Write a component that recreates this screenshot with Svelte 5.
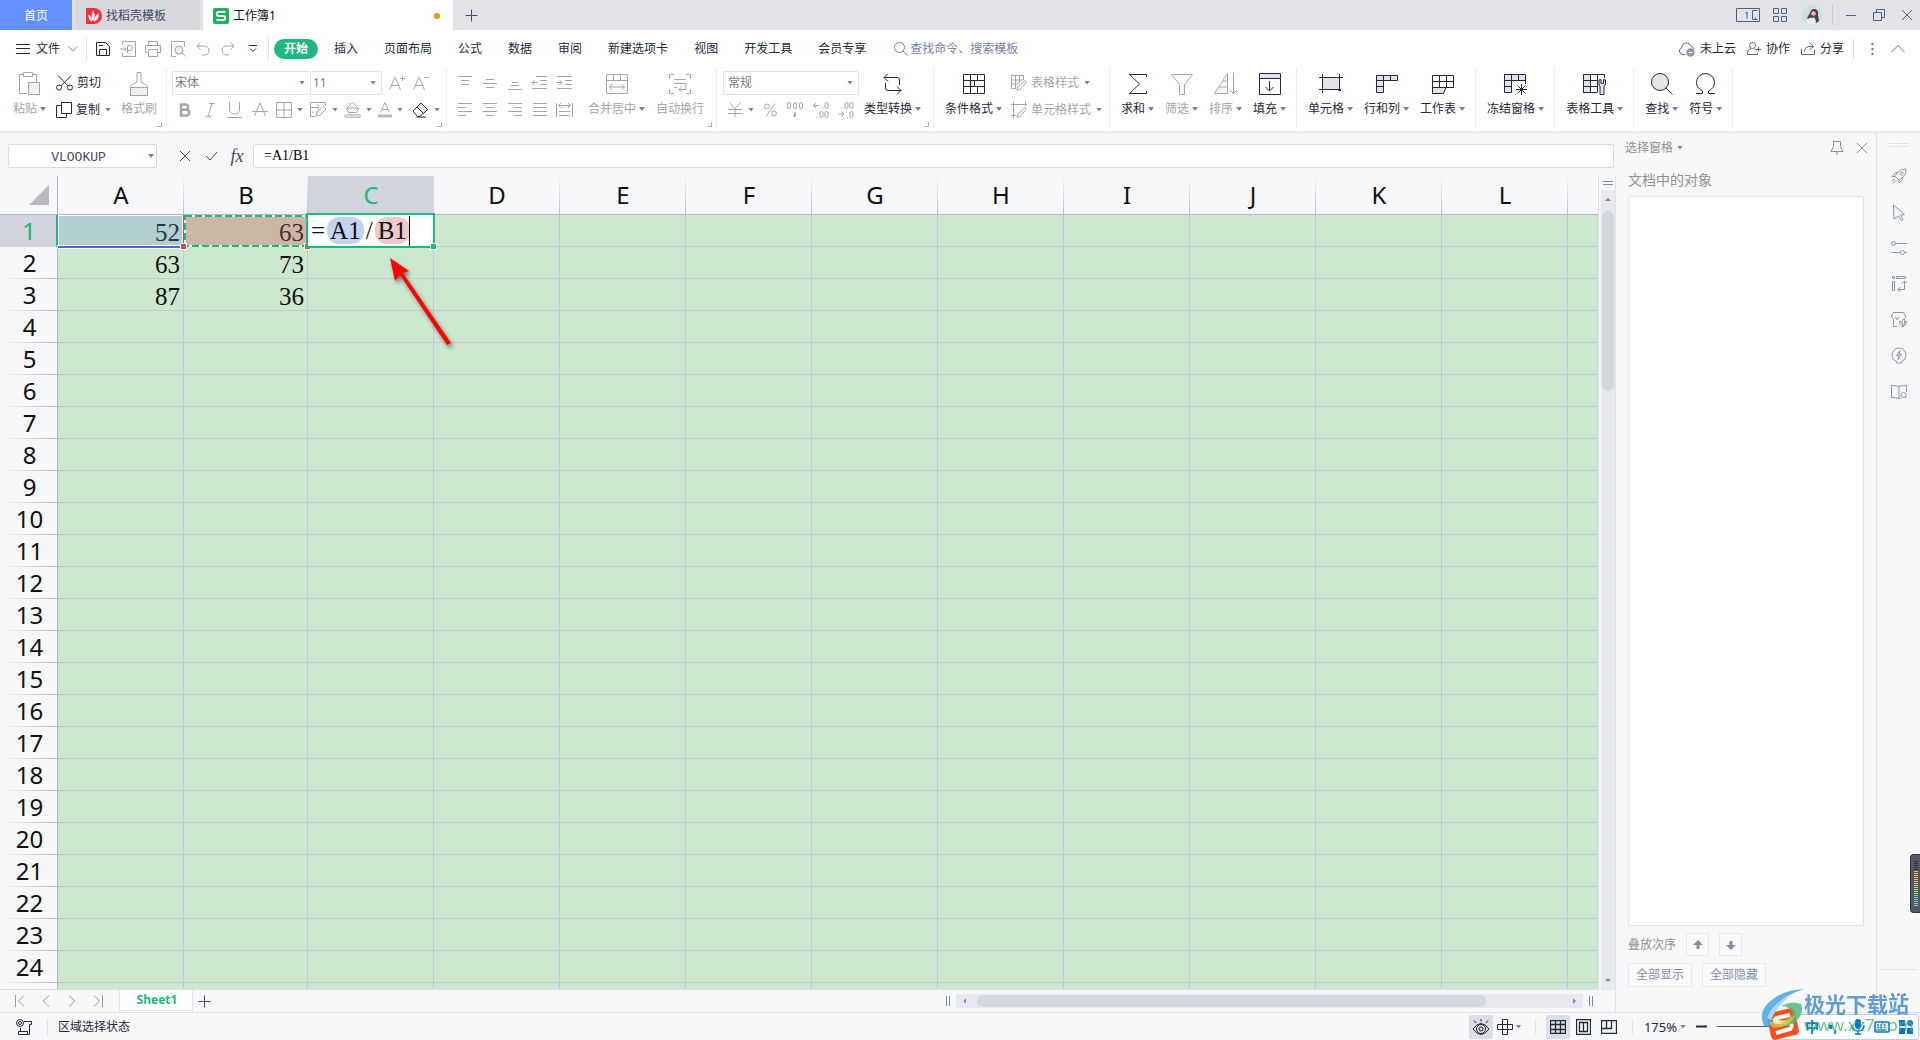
<script>
  const icons = {
    docer: [16, 16, '<g stroke="none"><path d="M0 0H8A7.800 7.800 0 0 1 8 16H0Z" fill="#f9303c"/><path d="M7 2.500C9.500 6 9 10 6.800 13.500C5.200 9 5.200 6 7 2.500ZM2.500 6.500C5 8 6 10.500 6 13.500C3.500 12.500 2 9.500 2.500 6.500ZM12.500 5C13.500 9.500 11 13 7.800 13.500C8.300 10 10 7 12.500 5Z" fill="#fff"/></g>'],
    wps: [16, 16, '<rect width="16" height="16" rx="2" fill="#17b45b" stroke="none"/><path d="M12.500 4H5.500Q3.800 4 3.800 6T5.500 8H10.500Q12.200 8 12.200 10T10.500 12H3.500" fill="none" stroke="#fff" stroke-width="1.800"/>'],
    plus: [13, 13, '<path d="M6.500 0.500V12.500M0.500 6.500H12.500"/>'],
    taskview: [25, 14, '<path d="M0.500 0.500H23.500V13.500H0.500ZM21.500 2.500H16.500V11.500H21.500M19.500 11V9.500M11 4V10.500M9.500 5L11 4"/>'],
    tiles: [14, 14, '<path d="M0.500 0.500H5.500V5.500H0.500ZM8.500 0.500H13.500V5.500H8.500ZM0.500 8.500H5.500V13.500H0.500ZM8.500 8.500H13.500V13.500H8.500Z"/>'],
    avatar: [20, 20, '<g stroke="none"><circle cx="10" cy="10" r="10" fill="#cddde2"/><path d="M8 8Q9 3.500 13 4Q17 5 16 10L17 16L14 18Q14 14 12 12L8 15L5 13Z" fill="#4a3e48"/><circle cx="11.500" cy="8.500" r="2.300" fill="#e8bfae"/><path d="M5 15Q9 10 13 15L12 19.500Q8 20 5 18Z" fill="#e7f0f4"/></g>'],
    min: [12, 12, '<path d="M1 6.500H11"/>'],
    restore: [12, 12, '<path d="M0.500 3.500H8.500V11.500H0.500ZM3.500 3.500V0.500H11.500V8.500H8.500"/>'],
    close: [12, 12, '<path d="M1 1L11 11M11 1L1 11"/>'],
    burger: [14, 12, '<path d="M0 1.500H14M0 5.500H14M0 10.500H14"/>'],
    chev: [10, 6, '<path d="M0.500 0.500L5 5L9.500 0.500"/>'],
    save: [16, 16, '<path d="M1.500 1.500H10.500L14.500 5.500V14.500H1.500ZM4.500 14V8.500H11.500V14M4 4.500H8"/>'],
    pdf: [16, 16, '<path d="M2.500 4V0.500H15.500V15.500H2.500V12M0 8H6M4 5.500L6.500 8L4 10.500M7.500 12V4.500H10Q12.500 5 12.500 7T10 9.500H7.500"/>'],
    print: [16, 16, '<path d="M3.500 4V0.500H12.500V4M3 11.500H0.500V4.500H15.500V11.500H13M3.500 8.500H12.500V15.500H3.500Z"/>'],
    preview: [16, 16, '<path d="M6 15.500H1.500V0.500H14.500V6"/><circle cx="9" cy="9" r="4" fill="#eee"/><path d="M12 12L15.500 15.500"/>'],
    undo: [14, 14, '<path d="M4.500 0.500L1 4L4.500 7.500M1 4H8.500A4.500 4.500 0 0 1 8.500 13H6"/>'],
    redo: [14, 14, '<path d="M9.500 0.500L13 4L9.500 7.500M13 4H5.500A4.500 4.500 0 0 0 5.500 13H8"/>'],
    more: [8, 10, '<path d="M0 1.500H8M1 4.500L4 7.500L7 4.500"/>'],
    search: [14, 14, '<circle cx="5.500" cy="5.500" r="5"/><path d="M9 9L13.500 13.500"/>'],
    cloud: [16, 16, '<path d="M6 13.500H4A3.500 3.500 0 0 1 2.500 6.800A5 5 0 0 1 12 5Q15 6 14.500 8.500"/><circle cx="11.500" cy="11.500" r="4.200" fill="#8d98b0" stroke="none"/><path d="M9.500 11.500H13.500" stroke="#fff"/>'],
    collab: [14, 14, '<circle cx="5.500" cy="3.500" r="3"/><path d="M4 6.500Q0.500 8 0.500 10.500V12.500H10.500V11M7 6.500L9 8.500M11.500 4.500V9.500M9 7.500H14"/>'],
    share: [14, 14, '<path d="M0.500 7V12.500H13.500V8M3.500 9.500Q4 4.500 9 4.500H12M8.500 0.500L12.500 4.500L8.500 8"/>'],
    dots: [3, 14, '<path d="M0.500 2H2.500M0.500 7H2.500M0.500 12H2.500" stroke-width="2"/>'],
    up: [14, 8, '<path d="M0.500 7L7 0.500L13.500 7"/>'],
    paste: [22, 24, '<path d="M8 21.500H0.500V2.500H4.500M13.500 2.500H17.500V10M4.500 0.500H13.500V4.500H4.500Z"/><path d="M9.500 10.500H20.500V22.500H9.500Z" fill="#f3f3f4"/>'],
    cut: [17, 16, '<path d="M2 0.500L12 11M15 0.500L5 11"/><circle cx="3" cy="12.500" r="2.500"/><circle cx="14" cy="12.500" r="2.500"/>'],
    copy: [16, 16, '<path d="M5.500 0.500H15.500V11.500H5.500ZM5 3.500H0.500V15.500H10.500V12"/>'],
    brush: [18, 24, '<path d="M7 0.500H11V10L17.500 14V23.500H0.500V14L7 10Z"/><path d="M0.500 15.500H17.500V23.500H0.500Z" fill="#efeff0"/>'],
    fontup: [16, 16, '<path d="M0.500 15L6 2L11.500 15M2.500 10.500H9.500M11 3.500H16M13.500 1V6"/>'],
    fontdown: [16, 16, '<path d="M0.500 15L6 2L11.500 15M2.500 10.500H9.500M11 2.500H16"/>'],
    bold: [12, 14, '<path d="M2 1.500H6.500A2.600 2.600 0 0 1 6.500 6.700H2ZM2 6.700H7.500A2.900 2.900 0 0 1 7.500 12.500H2Z" stroke-width="2.400"/>'],
    italic: [10, 14, '<path d="M4 0.500H9.500M0.500 13.500H6M7 0.500L3 13.500"/>'],
    underline: [15, 16, '<path d="M2.500 0V7Q2.500 12 7.500 12T12.500 7V0M0 15.500H15"/>'],
    strike: [16, 16, '<path d="M2.500 14L8 1L13.500 14M0 9.500H16"/>'],
    border: [16, 16, '<path d="M0.500 0.500H15.500V15.500H0.500ZM8 0.500V15.500M0.500 8H15.500"/>'],
    draw: [17, 16, '<path d="M5 14.500H0.500V0.500H15.500V4M0 5.500H9" /><path d="M2 10H8M8 2V9" stroke-dasharray="2 2"/><path d="M6 14L7 10.500L13 4.500L16 7L10 13Z"/>'],
    fill: [17, 16, '<path d="M2.500 6.500L8.500 0.500L15 7L12.500 10.500H4.500ZM4.500 0.500L7 3M2.500 6.500Q8 4.500 15 7"/><rect x="0.500" y="12.500" width="16" height="3" rx="1.500" fill="#ddd" stroke-width="0.600"/>'],
    color: [14, 16, '<path d="M2.500 10.500L7 0.500L11.500 10.500M4 7.500H10"/><rect y="12.500" width="14" height="3" fill="#b9b9bb" stroke="none"/>'],
    eraser: [17, 16, '<path d="M1 9L9 1L15.500 7.500L8 14.500H5.500ZM4.500 15H14" fill="#fff"/><path d="M5 5L9 1L15.500 7.500L11.500 11.500Z" fill="#dfe0e4"/>'],
    t1: [16, 16, '<path d="M1 1.500H15M4 5.500H12M4 9.500H12"/>'],
    t2: [16, 16, '<path d="M4 4.500H12M1 8.500H15M4 12.500H12"/>'],
    t3: [16, 16, '<path d="M5 7.500H11M4 10.500H12M1 14.500H15"/>'],
    ind1: [17, 16, '<path d="M5 1.500H16M9 5.500H16M9 9.500H16M1 13.500H16M1 7.500H7M3.500 5L1 7.500L3.500 10"/>'],
    ind2: [17, 16, '<path d="M1 1.500H16M9 5.500H16M9 9.500H16M1 13.500H16M0 7.500H6M3.500 5L6 7.500L3.500 10"/>'],
    l1: [16, 16, '<path d="M1 1.500H15M1 5.500H9M1 9.500H15M1 13.500H9"/>'],
    l2: [16, 16, '<path d="M1 1.500H15M4 5.500H12M1 9.500H15M4 13.500H12"/>'],
    l3: [16, 16, '<path d="M1 1.500H15M7 5.500H15M1 9.500H15M7 13.500H15"/>'],
    l4: [16, 16, '<path d="M1 1.500H15M1 5.500H15M1 9.500H15M1 13.500H15"/>'],
    l5: [17, 16, '<path d="M0.500 1V15M16.500 1V15M3 3.500H14M5 1L2.500 3.500L5 6M12 1L14.500 3.500L12 6M3 9.500H14M3 13.500H14"/>'],
    merge: [22, 20, '<path d="M0.500 0.500H21.500V19.500H0.500ZM0.500 6.500H21.500M7.500 0.500V6.500M14.500 0.500V6.500M3.500 13H18.500M6.500 10L3.500 13L6.500 16M15.500 10L18.500 13L15.500 16"/>'],
    wrap: [22, 20, '<path d="M5 0.500H0.500V5M17 0.500H21.500V5M0.500 15V19.500H5M21.500 15V19.500H17M5 5.500H17M5 9.500H17M5 13.500H8M17 9V15.500H10M12.500 13L10 15.500L12.500 18"/>'],
    yen: [16, 16, '<path d="M3 1L8 7L13 1M1 7.500H15M1 11.500H15M8 7V15"/>'],
    pct: [13, 14, '<circle cx="3" cy="3.500" r="2.500"/><circle cx="10" cy="10.500" r="2.500"/><path d="M11 0.500L2 13.500"/>'],
    thou: [17, 16, '<rect x="0.500" y="0.500" width="3" height="6" rx="1.500"/><rect x="6.500" y="0.500" width="3" height="6" rx="1.500"/><rect x="12.500" y="0.500" width="3" height="6" rx="1.500"/><path d="M8 10.500V13L7 15" stroke-width="2"/>'],
    dec1: [16, 16, '<path d="M0.500 3.500H6M3 1L0.500 3.500L3 6M9 6.500H10M3.500 15.500H4.500"/><rect x="12" y="0.500" width="3" height="6" rx="1.500"/><rect x="7" y="9.500" width="3" height="6" rx="1.500"/><rect x="12" y="9.500" width="3" height="6" rx="1.500"/>'],
    dec2: [16, 16, '<path d="M0.500 12H6M3.500 9.500L6 12L3.500 14.500M9 15.500H10M3.500 6.500H4.500"/><rect x="12" y="9.500" width="3" height="6" rx="1.500"/><rect x="7" y="0.500" width="3" height="6" rx="1.500"/><rect x="12" y="0.500" width="3" height="6" rx="1.500"/>'],
    convert: [20, 22, '<path d="M1 4.500H14Q16.500 4.500 16.500 7V12M5 0.500L1 4.500L5 8.500M2.500 10V15Q2.500 17.500 5 17.500H18M14 13.500L18 17.500L14 21.500"/>'],
    cond: [22, 20, '<path d="M6.500 6.500H10.500V13.500H6.500Z" fill="#dfe0e4" stroke="none"/><path d="M0.500 0.500H21.500V19.500H0.500ZM0.500 6.500H21.500M0.500 12.500H21.500M7.500 0.500V19.500M14.500 0.500V6.500M11.500 6.500V12.500M14.500 12.500V19.500"/>'],
    tstyle: [16, 16, '<path d="M12.500 5V0.500H0.500V13.500H5M0.500 5H12M0.500 9H8M4.500 0.500V13.500M8.500 0.500V8"/><path d="M6 15Q6 11 9 10.500L14 5.500L15.500 7.500L10.500 12.500Q9.500 15.500 6 15Z"/>'],
    cstyle: [16, 16, '<path d="M0 2.500H16M2.500 0V16M14.500 0V4M0 13.500H5"/><path d="M6 15Q6 11 9 10.500L14 5.500L15.500 7.500L10.500 12.500Q9.500 15.500 6 15Z"/>'],
    sum: [20, 22, '<path d="M18.500 4V1.500H1.500L11.500 11L1.500 20.500H18.500V18"/>'],
    filter: [22, 22, '<path d="M0.500 1.500H21.500L13.500 11.500V21.500H8.500V11.500Z"/>'],
    sort: [24, 22, '<path d="M13.500 0.500V20.500H0.500ZM9 8H13.500M5 14H13.500M19.500 0V20.500M16 17L19.500 20.500L23 17"/>'],
    fillin: [22, 22, '<path d="M0.500 0.500H21.500V5.500H0.500Z" fill="#e2e3e6"/><path d="M0.500 5.500V21.500H21.500V5.500M10.500 8V18M6.500 14L10.500 18L14.500 14"/>'],
    cell: [24, 20, '<path d="M3.500 3.500H20.500V15.500H3.500Z" fill="#e2e3e6"/><path d="M0 3.500H24M0 15.500H18M3.500 0V19M20.500 0V13" /><path d="M19.500 16H22" stroke-width="2"/>'],
    rowcol: [22, 20, '<path d="M0.500 1.500H21.500V6.500H7.500V18.500H0.500Z" fill="#e2e3e6"/><path d="M7.500 1.500V6.500H0.500M14.500 1.500V6.500M0.500 12.500H7.500"/>'],
    sheet: [22, 20, '<path d="M0.500 13.500H14L11.500 19.500H0.500Z" fill="#e2e3e6"/><path d="M0.500 1.500H21.500V13.500H0.500ZM0.500 7.500H21.500M7.500 1.500V13.500M14.500 1.500V13.500"/>'],
    freeze: [24, 22, '<path d="M0.500 1.500H21.500V7.500H7.500V19.500H0.500Z" fill="#e2e3e6"/><path d="M7.500 1.500V7.500H0.500M14.500 1.500V7.500M0.500 13.500H7.500M21.500 7V11M17.500 11V22M12 16.500H23M13.500 12.500L21.500 20.500M21.500 12.500L13.500 20.500"/>'],
    tools: [24, 22, '<path d="M0.500 1.500H7.500V19.500H0.500Z" fill="#e2e3e6"/><path d="M21.500 5V1.500H0.500V19.500H14M0.500 7.500H15M0.500 13.500H14M7.500 1.500V19.500M14.500 1.500V19.500"/><path d="M16 7V12L17 13V21.500H21V13L22.500 12V7L20.500 6.500V10.500H18V6.500Z" fill="#e2e3e6"/>'],
    find: [22, 22, '<circle cx="9" cy="9" r="8.500" fill="#e6e6e9"/><path d="M15 15L21.500 21.500"/>'],
    omega: [22, 22, '<path d="M1 20.500H7.500V18Q1.500 15 1.500 9.500A9 9 0 0 1 19.500 9.500Q19.500 15 13.500 18V20.500H20"/>'],
    tick: [13, 10, '<path d="M1 5L5 9L12 1"/>'],
    pin: [14, 14, '<path d="M3.500 0.500H10.500V5.500L13 10.500H1L3.500 5.500ZM7 10.500V14"/>'],
    rocket: [16, 16, '<path d="M4 8.500L7 4Q10 0.500 15 1Q15.500 6 12 9L8 12ZM4 8.500H1L4.500 4.500H7M8 12V15L11.500 11.500V9M3.500 10.500L1 13M5.500 12L2 15.500"/><circle cx="10.500" cy="5.500" r="1.500"/>'],
    pointer: [14, 17, '<path d="M1.500 1L12.500 10.500L8.500 11L11 15.500L9 16.500L6.500 12L2 15Z"/>'],
    sliders: [16, 16, '<circle cx="2.500" cy="3.500" r="2"/><circle cx="11.500" cy="12.500" r="2"/><path d="M5 3.500H16M0 12.500H9M14 12.500H16"/>'],
    resize: [16, 16, '<path d="M1.500 0.500H3.500V2.500H1.500ZM5.500 0.500H14.500V2.500H5.500ZM1.500 5.500H3.500V14.500H1.500ZM13.500 5V13.500H7M11 7.500L13.500 5L16 7.500M9.500 11L7 13.500L9.500 16"/>'],
    store: [16, 16, '<path d="M6 14.500H2.500V7Q0.500 6 0.500 4L2.500 0.500H12.500L14.500 4V6M5 5V7Q6.500 9 8 5"/><path d="M11.500 15Q8 13 8.500 9Q10 9.500 11 11Q11 8 13 6.500Q14 8 13.500 11Q14 9.500 15.500 9Q15.500 14 11.500 15ZM11 11L12 15M13.500 11L12 15"/>'],
    bulb: [16, 18, '<path d="M5.500 16V14.500A7 7 0 1 1 10.500 14.500V16Z"/><path d="M9 3.500L5.500 8.500H8L7 12.500L10.500 7.500H8Z"/>'],
    book: [16, 16, '<path d="M8 15V2.500Q5 1.500 0.500 1.500V13.500Q5 13.500 8 14.500M8 2.500Q11 1.500 15.500 1.500V8M10 14.500H8"/><circle cx="12.500" cy="11" r="2.500"/><path d="M14 12.500L16 14.500"/>'],
    aup: [10, 10, '<path d="M5 0L10 5H6.500V9H3.500V5H0Z" fill="currentColor" stroke="none"/>'],
    adown: [10, 10, '<path d="M5 10L0 5H3.500V1H6.500V5H10Z" fill="currentColor" stroke="none"/>'],
    first: [10, 12, '<path d="M0.500 0V12M9 0.500L3.500 6L9 11.500"/>'],
    prev: [10, 12, '<path d="M8 0.500L2 6L8 11.500"/>'],
    next: [10, 12, '<path d="M2 0.500L8 6L2 11.500"/>'],
    last: [10, 12, '<path d="M9.500 0V12M1 0.500L6.500 6L1 11.500"/>'],
    macro: [17, 16, '<circle cx="4" cy="4" r="3.500"/><circle cx="4" cy="4" r="1.500"/><path d="M8 2.500H15.500V5.500H13.500V12M4.500 9V12M2.500 12.500H11.500V15.500H2.500ZM11.500 15.500H13.500V11"/>'],
    eye: [18, 16, '<path d="M1 10Q5 4.500 9 4.500T17 10Q13 15.500 9 15.500T1 10ZM9 0V2.500M2 1.500L4 4M16 1.500L14 4"/><circle cx="9" cy="10" r="4.500"/><circle cx="9" cy="10" r="2"/>'],
    cross: [16, 16, '<path d="M5.500 0.500H10.500V15.500H5.500ZM0.500 5.500H15.500V10.500H0.500Z"/>'],
    vgrid: [16, 14, '<path d="M0.500 0.500H15.500V13.500H0.500ZM0.500 4.500H15.500M0.500 9.500H15.500M5.500 0.500V13.500M10.500 0.500V13.500" stroke-width="1.300"/>'],
    vpage: [15, 16, '<path d="M0.500 0.500H14.500V15.500H0.500ZM3.500 3.500H11.500V12.500H3.500ZM7.500 3.500V12.500" stroke-width="1.300"/>'],
    vbreak: [16, 14, '<path d="M0.500 0.500H15.500V13.500H0.500ZM5.500 0.500V8.500M10.500 0.500V8.500H0.500" stroke-width="1.300"/>'],
    minus: [11, 3, '<path d="M0 1.500H11" stroke-width="2"/>'],
    bars: [4, 10, '<path d="M0.500 0V10M3.500 0V10"/>'],
    mic: [14, 16, '<rect x="4" y="0" width="6" height="10" rx="3" fill="currentColor" stroke="none"/><path d="M1 6Q1 12 7 12T13 6M7 12V16M4 15H10" stroke-width="1.500"/>'],
    keys: [16, 12, '<rect x="1" y="1" width="14" height="10" rx="1" stroke-width="1.600"/><path d="M3 4H13M3 6.500H13" stroke-dasharray="2 1.300" stroke-width="1.500"/><path d="M4 9H12" stroke-width="1.300"/>'],
    apps: [14, 14, '<path d="M0 0H6V6H0ZM8 8H14V14H8ZM0 8H6V14H0Z" fill="currentColor" stroke="none"/><circle cx="11" cy="3" r="3" fill="currentColor" stroke="none"/>']
  };

  const menus = ['开始', '插入', '页面布局', '公式', '数据', '审阅', '新建选项卡', '视图', '开发工具', '会员专享'];
  const quick = ['save', 'pdf', 'print', 'preview', 'undo', 'redo', 'more'];
  const quickNames = ['保存', '输出为PDF', '打印', '打印预览', '撤销', '恢复', '更多'];
  const styleTools = [['bold', '加粗'], ['italic', '倾斜'], ['underline', '下划线'], ['strike', '删除线']];
  const dropTools = [['border', '边框'], ['draw', '绘制边框'], ['fill', '填充颜色'], ['color', '字体颜色'], ['eraser', '清除']];
  const alignA = [['t1', '顶端对齐'], ['t2', '垂直居中'], ['t3', '底端对齐'], ['ind1', '减少缩进'], ['ind2', '增加缩进']];
  const alignB = [['l1', '左对齐'], ['l2', '水平居中'], ['l3', '右对齐'], ['l4', '两端对齐'], ['l5', '分散对齐']];
  const groups = [
    [['sum', '求和'], ['filter', '筛选', true], ['sort', '排序', true], ['fillin', '填充']],
    [['cell', '单元格'], ['rowcol', '行和列'], ['sheet', '工作表']],
    [['freeze', '冻结窗格']],
    [['tools', '表格工具']],
    [['find', '查找'], ['omega', '符号']]
  ];
  // The last column and row are only partly in view, so they carry no heading.
  const columns = [...'ABCDEFGHIJKL', ''];
  const rows = [...Array.from({ length: 24 }, (_, i) => i + 1), ''];
  const values = { A1: 52, B1: 63, A2: 63, B2: 73, A3: 87, B3: 36 };
  const side = [['rocket', '快捷'], ['pointer', '选择'], ['sliders', '属性'], ['resize', '尺寸'], ['store', '稻壳'], ['bulb', '帮助'], ['book', '词典']];
  const meter = Array.from({ length: 23 }, (_, i) => i);
</script>

{#snippet icon(name)}
  <svg class="icon" width={icons[name][0]} height={icons[name][1]} viewBox="0 0 {icons[name][0]} {icons[name][1]}" aria-hidden="true">{@html icons[name][2]}</svg>
{/snippet}

{#snippet big(name, label, off, drop)}
  <button class="big" class:off>
    <span class="pic">{@render icon(name)}</span>
    <span class="lab">{label}{#if drop}<i class="caret"></i>{/if}</span>
  </button>
{/snippet}

<div class="app">
  <header class="title">
    <button class="tab home">首页</button>
    <button class="tab docer">{@render icon('docer')}找稻壳模板</button>
    <button class="tab current">{@render icon('wps')}工作簿1<i class="unsaved"></i></button>
    <button class="newtab" aria-label="新建">{@render icon('plus')}</button>
    <div class="window">
      <button aria-label="布局">{@render icon('taskview')}</button>
      <button aria-label="应用">{@render icon('tiles')}</button>
      <button class="avatar" aria-label="账号">{@render icon('avatar')}</button>
      <i class="wsep"></i>
      <button aria-label="最小化">{@render icon('min')}</button>
      <button class="wide" aria-label="还原">{@render icon('restore')}</button>
      <button class="wide" aria-label="关闭">{@render icon('close')}</button>
    </div>
  </header>

  <nav class="menu">
    <button class="file">{@render icon('burger')}文件<span class="faint">{@render icon('chev')}</span></button>
    <div class="quick">
      {#each quick as q, i}
        <button class:off={i > 0 && i < 6} aria-label={quickNames[i]}>{@render icon(q)}</button>
      {/each}
    </div>
    <div class="menus">
      {#each menus as m, i}
        <button class:active={i === 0}>{m}</button>
      {/each}
    </div>
    <button class="find">{@render icon('search')}查找命令、搜索模板</button>
    <div class="account">
      <button>{@render icon('cloud')}未上云</button>
      <button>{@render icon('collab')}协作</button>
      <button>{@render icon('share')}分享</button>
    </div>
    <div class="fold">
      <button aria-label="更多">{@render icon('dots')}</button>
      <button aria-label="收起">{@render icon('up')}</button>
    </div>
  </nav>

  <div class="ribbon">
    <section class="group clip">
      {@render big('paste', '粘贴', true, true)}
      <div class="stack">
        <button class="small">{@render icon('cut')}剪切</button>
        <button class="small">{@render icon('copy')}复制<i class="caret"></i></button>
      </div>
      {@render big('brush', '格式刷', true, false)}
      <i class="launch"></i>
    </section>

    <section class="group font off">
      <div class="line">
        <label class="pick family"><select aria-label="字体"><option>宋体</option></select><i class="caret"></i></label>
        <label class="pick size"><select aria-label="字号"><option>11</option></select><i class="caret"></i></label>
        <button class="grow" aria-label="增大字号">{@render icon('fontup')}</button>
        <button class="grow" aria-label="减小字号">{@render icon('fontdown')}</button>
      </div>
      <div class="line">
        {#each styleTools as [n, t]}
          <button class="tool" aria-label={t}>{@render icon(n)}</button>
        {/each}
        {#each dropTools as [n, t]}
          <button class="drop" class:on={n === 'eraser'} aria-label={t}>{@render icon(n)}<i class="caret"></i></button>
        {/each}
      </div>
      <i class="launch"></i>
    </section>

    <section class="group align off">
      <div class="stack">
        <div class="line">
          {#each alignA as [n, t]}<button class="tool" aria-label={t}>{@render icon(n)}</button>{/each}
        </div>
        <div class="line">
          {#each alignB as [n, t]}<button class="tool" aria-label={t}>{@render icon(n)}</button>{/each}
        </div>
      </div>
      {@render big('merge', '合并居中', true, true)}
      {@render big('wrap', '自动换行', true, false)}
      <i class="launch"></i>
    </section>

    <section class="group number">
      <div class="stack off">
        <div class="line">
          <label class="pick format"><select aria-label="数字格式"><option>常规</option></select><i class="caret"></i></label>
        </div>
        <div class="line nums">
          <button class="drop" aria-label="货币">{@render icon('yen')}<i class="caret"></i></button>
          <button class="tool" aria-label="百分比">{@render icon('pct')}</button>
          <button class="tool" aria-label="千位分隔">{@render icon('thou')}</button>
          <button class="tool" aria-label="增加小数位">{@render icon('dec1')}</button>
          <button class="tool" aria-label="减少小数位">{@render icon('dec2')}</button>
        </div>
      </div>
      {@render big('convert', '类型转换', false, true)}
      <i class="launch"></i>
    </section>

    <section class="group styles">
      {@render big('cond', '条件格式', false, true)}
      <div class="stack">
        <button class="small off">{@render icon('tstyle')}表格样式<i class="caret"></i></button>
        <button class="small off">{@render icon('cstyle')}单元格样式<i class="caret"></i></button>
      </div>
    </section>

    {#each groups as g}
      <section class="group">
        {#each g as [n, t, off]}
          {@render big(n, t, off, true)}
        {/each}
      </section>
    {/each}
  </div>

  <main class="work">
    <div class="book">
      <div class="formula">
        <div class="name"><input aria-label="名称框" value="VLOOKUP" /><button aria-label="展开名称"><i class="caret"></i></button></div>
        <button aria-label="取消">{@render icon('close')}</button>
        <button aria-label="输入">{@render icon('tick')}</button>
        <button class="fx" aria-label="插入函数">fx</button>
        <input class="entry" aria-label="编辑栏" value="=A1/B1" />
      </div>

      <div class="canvas">
        <div class="sheet">
          <table>
            <thead>
              <tr>
                <th class="corner"><i class="tri"></i></th>
                {#each columns as c}
                  <th class="col" class:narrow={c === 'B'} class:sel={c === 'C'}>{c}</th>
                {/each}
              </tr>
            </thead>
            <tbody>
              {#each rows as r}
                <tr>
                  <th class="row" class:sel={r === 1}>{r}</th>
                  {#each columns as c}
                    {#if r === 1 && c === 'A'}
                      <td class="refa">52</td>
                    {:else if r === 1 && c === 'B'}
                      <td class="refb">63<svg class="ants" aria-hidden="true"><rect class="base" x="1" y="1" width="122" height="30" /><rect x="1" y="1" width="122" height="30" /></svg></td>
                    {:else if r === 1 && c === 'C'}
                      <td><div class="edit">=<span class="ra">A1</span>/<span class="rb">B1</span><i class="cursor"></i></div></td>
                    {:else}
                      <td>{values[c + r] ?? ''}</td>
                    {/if}
                  {/each}
                </tr>
              {/each}
            </tbody>
          </table>
          <svg class="pointer" width="80" height="106" viewBox="0 0 80 106" aria-hidden="true">
            <path d="M4 4L23 17L17 19L65 89L61 91L14 21L9 27Z" />
          </svg>
        </div>
        <div class="vbar">
          <i class="split"></i>
          <div class="vtrack"><i class="tu"></i><i class="vthumb"></i><i class="td"></i></div>
        </div>
      </div>

      <div class="sheets">
        <div class="navs">
          <button aria-label="第一个">{@render icon('first')}</button>
          <button aria-label="上一个">{@render icon('prev')}</button>
          <button aria-label="下一个">{@render icon('next')}</button>
          <button aria-label="最后一个">{@render icon('last')}</button>
        </div>
        <button class="stab">Sheet1</button>
        <button class="add" aria-label="新建工作表">{@render icon('plus')}</button>
        <div class="hbar">
          {@render icon('bars')}
          <div class="htrack"><i class="tl"></i><i class="hthumb"></i><i class="tr"></i></div>
          {@render icon('bars')}
        </div>
      </div>
    </div>

    <aside class="pane">
      <div class="phead">
        <button>选择窗格<i class="caret"></i></button>
        <span class="pacts">
          <button aria-label="固定">{@render icon('pin')}</button>
          <button aria-label="关闭窗格">{@render icon('close')}</button>
        </span>
      </div>
      <h2>文档中的对象</h2>
      <div class="list"></div>
      <div class="order">叠放次序
        <button aria-label="上移">{@render icon('aup')}</button>
        <button aria-label="下移">{@render icon('adown')}</button>
      </div>
      <div class="shows">
        <button>全部显示</button>
        <button>全部隐藏</button>
      </div>
    </aside>

    <aside class="rail">
      <i class="grip"></i>
      {#each side as [n, t]}
        <button aria-label={t}>{@render icon(n)}</button>
      {/each}
      <i class="rule"></i>
      <button class="ell" aria-label="更多工具"><i></i><i></i><i></i></button>
    </aside>
  </main>

  <footer class="status">
    <span class="mac">{@render icon('macro')}</span>
    <span class="state">区域选择状态</span>
    <div class="views">
      <button class="on" aria-label="护眼模式">{@render icon('eye')}</button>
      <button class="read" aria-label="阅读模式">{@render icon('cross')}<i class="caret"></i></button>
      <i class="ssep"></i>
      <button class="on" aria-label="普通视图">{@render icon('vgrid')}</button>
      <button aria-label="页面布局">{@render icon('vpage')}</button>
      <button aria-label="分页预览">{@render icon('vbreak')}</button>
      <i class="ssep"></i>
      <button class="pct">175%<i class="caret"></i></button>
      <button class="less" aria-label="缩小">{@render icon('minus')}</button>
      <input type="range" aria-label="缩放" min="10" max="400" value="290" />
    </div>
  </footer>

  <div class="meter">
    {#each meter as m}<i class:dark={m < 5} class:amber={m >= 5 && m < 11} class:lime={m >= 11 && m < 17}></i>{/each}
  </div>

  <div class="ime">
    <span>中</span><span class="punct">•,</span>{@render icon('mic')}{@render icon('keys')}{@render icon('apps')}
  </div>
  <svg class="logo" width="44" height="52" viewBox="0 0 44 52" aria-hidden="true">
    <path d="M8 25L30 20Q33 20 34 24L38 43Q38 46 34 47L14 52Q11 52 10 48L6 30Q6 26 8 25Z" fill="#f4511e" />
    <path d="M29 27L16 30Q12 32 15 34L28 35Q33 37 29 41L15 45" fill="none" stroke="#fff" stroke-width="4" />
    <path d="M3 38Q-4 22 12 11Q24 2 43 1Q24 7 17 16Q9 26 12 36Q8 40 3 38Z" fill="#4aa3e3" opacity="0.850" />
    <path d="M6 30Q10 16 30 7Q15 19 10 32Z" fill="#a5d8f7" />
    <path d="M20 18Q30 12 40 16Q44 26 33 35Q24 40 14 38Q31 33 32 25Q30 19 20 18Z" fill="#55b87c" opacity="0.850" />
    <path d="M8 34Q22 35 34 27Q30 39 12 40Z" fill="#e9d843" opacity="0.600" />
  </svg>
  <div class="mark"><b>极光下载站</b><span>www.xz7.com</span></div>
</div>

<style>
  :global(body) { margin: 0; }
  .app {
    --ink: #1f2a3c;
    --green: #20b97d;
    position: relative;
    display: flex;
    flex-direction: column;
    height: 100vh;
    overflow: hidden;
    background: #f6f7f9;
    color: var(--ink);
    font: 12px/16px "Noto Sans", "Noto Sans CJK SC", sans-serif;
  }
  .app :global(*) { box-sizing: border-box; }
  button { font: inherit; color: inherit; background: none; border: 0; padding: 0; margin: 0; white-space: nowrap; display: flex; align-items: center; }
  input, select { font: inherit; color: inherit; border: 0; outline: 0; padding: 0; margin: 0; background: none; }
  .icon { display: block; flex: none; fill: none; stroke: currentColor; }
  .caret { flex: none; width: 6px; height: 4px; margin-left: 3px; background: #76829b; clip-path: polygon(0 0, 100% 0, 50% 100%); }
  .off { color: #a5a5a7; }

  .title { display: flex; flex: none; height: 30px; background: #e2e3e7; }
  .tab { gap: 4px; padding: 2px 11px 0; margin-right: 3px; }
  .home { width: 72px; justify-content: center; background: #6291fc; color: #fff; }
  .docer { width: 125px; background: #d8d9dd; color: #414b60; }
  .current { width: 250px; padding: 2px 13px 0 10px; margin-right: 0; background: #fff; color: #111; }
  .unsaved { width: 6px; height: 6px; border-radius: 50%; background: #e69a05; margin-left: auto; }
  .newtab { padding: 0 12px; color: #414f6d; }
  .window { display: flex; align-items: center; margin-left: auto; padding-right: 7px; color: #4d5f82; gap: 12px; }
  .window .avatar { margin: 0 -2px 0 3px; }
  .window .wide { margin-left: 4px; }
  .wsep { width: 1px; height: 20px; background: #c5c8cf; }

  .menu { display: flex; flex: none; align-items: center; height: 38px; background: #fff; }
  .file { gap: 6px; padding-left: 16px; }
  .faint { color: #8c8c90; margin-left: 2px; }
  .quick { display: flex; align-items: center; height: 24px; margin-left: 8px; padding: 0 3px; border: solid #e0e1e5; border-width: 0 1px; }
  .quick button { width: 25px; height: 20px; justify-content: center; }
  .menus { display: flex; gap: 6px; margin-left: 5px; }
  .menus button { height: 20px; padding: 0 10px; border-radius: 10px; }
  .menus .active { background: var(--green); color: #fff; font-weight: 700; }
  .find { margin-left: 18px; gap: 2px; color: #76829f; }
  .account { display: flex; gap: 11px; margin-left: auto; }
  .account button { gap: 5px; }
  .account :global(svg) { color: #59657c; }
  .fold { display: flex; align-items: center; height: 20px; gap: 17px; margin-left: 9px; padding: 0 15px 0 17px; border-left: 1px solid #d9dbe0; color: #6b7180; }

  .ribbon { display: flex; flex: none; height: 64px; background: #fff; border-bottom: 1px solid #e6e7ea; box-shadow: 0 1px 3px #0001; z-index: 1; }
  .group { position: relative; display: flex; flex: none; gap: 11px; padding: 1px 11px 0; }
  .group::after { content: ""; position: absolute; right: 0; top: 0; width: 1px; height: 61px; background: #ebecee; }
  .launch { position: absolute; right: 5px; bottom: 4px; width: 5px; height: 5px; border: solid #a9b3c8; border-width: 0 1px 1px 0; }
  .big { flex-direction: column; height: 50px; }
  .pic { display: flex; align-items: center; height: 30px; }
  .lab { display: flex; align-items: center; height: 20px; }
  .stack { display: flex; flex-direction: column; }
  .small { height: 27px; gap: 4px; }
  .small .caret { margin-left: 1px; }
  .clip { width: 167px; padding-left: 13px; gap: 10px; }
  .font { flex-direction: column; gap: 0; width: 280px; padding: 1px 0 0 5px; }
  .line { display: flex; align-items: center; height: 27px; }
  .pick { display: flex; align-items: center; height: 24px; padding: 0 5px 0 2px; border: 1px solid #e0e1e5; border-radius: 2px; color: #7d7d80; background: #fff; }
  .pick select { appearance: none; flex: 1; min-width: 0; opacity: 1; }
  .family { width: 139px; }
  .size { width: 71px; border-left: 0; }
  .grow { width: 24px; justify-content: center; }
  .size + .grow { margin-left: 3px; }
  .tool { width: 25px; height: 20px; justify-content: center; }
  .drop { width: 34px; height: 20px; padding-left: 4px; }
  .drop .caret { margin-left: 5px; }
  .on { color: var(--ink); }
  .align { width: 270px; padding-left: 5px; }
  .number { width: 217px; padding-left: 6px; gap: 5px; }
  .format { width: 136px; padding-left: 4px; }
  .nums .drop { width: 35px; }
  .styles { width: 176px; gap: 9px; }

  .work { display: flex; flex: 1; min-height: 0; }
  .book { display: flex; flex-direction: column; flex: 1; min-width: 0; }
  .formula { display: flex; flex: none; align-items: center; height: 44px; padding: 4px 2px 0 8px; color: #3d4a63; }
  .formula > button { width: 26px; justify-content: center; }
  .name { display: flex; align-items: center; width: 149px; height: 24px; margin-right: 15px; padding-right: 2px; border: 1px solid #d8dae0; border-radius: 2px; background: #fff; }
  .name input { flex: 1; min-width: 0; height: 20px; padding: 2px 0 0 0; text-align: center; font: 13px/16px "Liberation Mono", monospace; }
  .name .caret { margin-left: 0; }
  .formula > .fx { font: italic 18px/20px "Liberation Serif", serif; }
  .formula .entry { flex: 1; height: 24px; margin-left: 3px; padding-left: 10px; border: 1px solid #d8dae0; border-radius: 2px; background: #fff; color: #000; font: 14px/16px "Liberation Serif", serif; }

  .canvas { display: flex; flex: 1; min-height: 0; }
  .sheet { position: relative; flex: 1; min-width: 0; overflow: hidden; border: solid #dcdee4; border-width: 0 1px 1px 0; }
  table { border-collapse: separate; border-spacing: 0; }
  th { font: 24px/30px "Noto Sans", sans-serif; color: #111; padding: 0; background: #f6f7f9; }
  .corner { width: 58px; min-width: 58px; height: 39px; border: solid #b3b6cc; border-width: 0 1px 1px 0; }
  .tri { display: block; width: 20px; height: 20px; margin-left: 29px; background: #b9babd; clip-path: polygon(100% 0, 100% 100%, 0 100%); }
  .col { width: 126px; min-width: 126px; border-bottom: 1px solid #b3b6cc; background: linear-gradient(#f6f7f9, #b8bbcf) right / 1px 100% no-repeat #f6f7f9; }
  .narrow { width: 124px; min-width: 124px; }
  .row { height: 32px; padding-left: 2px; border-right: 1px solid #b3b6cc; background: linear-gradient(90deg, #f6f7f9, #b3b6cc) bottom / 100% 1px no-repeat #f6f7f9; }
  th.sel { background: #d2d4dc; color: var(--green); }
  .row.sel { border-right: 2px solid var(--green); }
  td { position: relative; height: 32px; padding: 5px 3px 0; border: solid #c3c8d9; border-width: 0 1px 1px 0; background: #cce8cf; color: #111; text-align: right; font: 25px/26px "Liberation Serif", serif; }
  .refa { padding-bottom: 0; background: #b2cfcd; color: #27364f; box-shadow: inset 1px 1px #fff, inset -1px 0 #fff; border-right-color: #c94f4f; border-bottom-color: #4b6bd0; }
  .refb { background: #cab7a5; color: #4d2b2b; border-bottom-color: #c94f4f; }
  .refa::before, .refa::after, .refb::after { content: ""; position: absolute; z-index: 1; width: 5px; height: 5px; bottom: -3px; right: -3px; background: #c94f4f; outline: 1px solid #fff; }
  .refa::before { right: 3px; left: 0; width: auto; height: 2px; bottom: -2px; background: #4b6bd0; }
  .ants { position: absolute; left: 0; top: 0; width: 124px; height: 32px; fill: none; stroke: var(--green); stroke-width: 2; stroke-dasharray: 7 3; }
  .ants .base { stroke: #fff; stroke-dasharray: none; }
  .edit { position: absolute; z-index: 2; left: -2px; top: -2px; display: flex; align-items: center; gap: 2px; width: 129px; height: 35px; padding-left: 3px; border: 2px solid var(--green); background: #fff; font: 25px/26px "Liberation Serif", serif; }
  .edit::after { content: ""; position: absolute; right: -3px; bottom: -3px; width: 5px; height: 5px; background: var(--green); outline: 1px solid #fff; }
  .ra, .rb { padding: 1px 3px 0; border-radius: 12px; background: #c7d2f0; }
  .rb { margin-right: -3px; background: #edc9c9; }
  .cursor { width: 1px; height: 30px; background: #000; }
  .pointer { position: absolute; left: 386px; top: 78px; fill: #fb0404; filter: drop-shadow(2px 3px 2px #0007); }
  .vbar { display: flex; flex-direction: column; flex: none; width: 17px; padding-left: 2px; border-right: 1px solid #dfe1e6; }
  .split { height: 4px; width: 10px; margin: 5px 2px; border: solid #7c89a5; border-width: 1px 0; }
  .vtrack { display: flex; flex: 1; flex-direction: column; align-items: center; padding: 8px 0; background: #e8e9ef; }
  .tu, .td, .tl, .tr { flex: none; width: 6px; height: 3px; background: #7c89a5; clip-path: polygon(50% 0, 100% 100%, 0 100%); }
  .td { margin-top: auto; clip-path: polygon(0 0, 100% 0, 50% 100%); }
  .vthumb { width: 12px; height: 23%; margin-top: 10px; border-radius: 6px; background: #d4d7df; }
  .sheets { display: flex; flex: none; align-items: stretch; height: 22px; border-right: 1px solid #dfe1e6; }
  .navs { display: flex; align-items: center; gap: 16px; padding-left: 15px; width: 119px; color: #9b9ca1; }
  .stab { width: 74px; padding-left: 2px; justify-content: center; margin-bottom: 1px; border: solid #e0e2e7; border-width: 0 1px 1px; background: #fff; color: var(--green); font-weight: 700; }
  .add { padding-left: 5px; color: #3d4a63; }
  .hbar { display: flex; align-items: center; flex: none; width: 41.4%; gap: 6px; margin-left: auto; padding-right: 22px; color: #7c89a5; }
  .htrack { display: flex; flex: 1; align-items: center; height: 14px; padding: 0 7px; background: #e8e9ef; }
  .tl, .tr { width: 3px; height: 6px; clip-path: polygon(0 50%, 100% 0, 100% 100%); }
  .tr { margin-left: auto; clip-path: polygon(0 0, 100% 50%, 0 100%); }
  .hthumb { width: 83%; height: 12px; margin-left: 11px; border-radius: 6px; background: #d4d7df; }

  .pane { display: flex; flex-direction: column; flex: none; width: 260px; padding: 0 12px 25px; color: #919194; }
  .phead { display: flex; align-items: center; height: 31px; margin: 0 -4px 0 -3px; }
  .phead .caret { margin-left: 4px; }
  .pacts { display: flex; gap: 12px; margin-left: auto; }
  h2 { margin: 9px 0 8px; font: 14px/16px "Noto Sans", "Noto Sans CJK SC", sans-serif; }
  .list { flex: 1; border: 1px solid #dfe1e6; border-radius: 2px; background: #fff; }
  .order { display: flex; align-items: center; gap: 10px; height: 23px; margin-top: 7px; }
  .order button, .shows button { justify-content: center; height: 23px; border: 1px solid #e6e7eb; background: #f9fafc; color: #8490a8; }
  .order button { width: 23px; }
  .shows { display: flex; gap: 10px; margin-top: 7px; }
  .shows button { width: 64px; height: 24px; }

  .rail { display: flex; flex-direction: column; align-items: center; flex: none; width: 44px; border-left: 1px solid #dfe1e6; color: #8f96a3; }
  .rail button { flex: none; width: 24px; height: 36px; justify-content: center; }
  .grip { flex: none; width: 20px; height: 4px; margin: 11px 0 11px; border: solid #dfe1e6; border-width: 1px 0; }
  .rule { width: 38px; height: 1px; margin-top: auto; background: #dfe1e6; }
  .rail .ell { height: 42px; gap: 3px; padding-top: 6px; }
  .ell i { width: 3px; height: 3px; border-radius: 50%; background: #7c89a5; }

  .status { display: flex; flex: none; align-items: center; height: 28px; border-top: 1px solid #dfe1e6; }
  .mac { width: 48px; padding-left: 16px; border-right: 1px solid #dfe1e6; }
  .state { padding-left: 10px; }
  .views { display: flex; align-items: center; margin-left: auto; padding-right: 91px; }
  .views button { height: 24px; justify-content: center; width: 26px; }
  .views .on { width: 24px; border-radius: 2px; background: #dadee5; }
  .views .read { width: 32px; }
  .ssep { width: 1px; height: 14px; margin: 0 10px; background: #dfe1e6; }
  .views .pct { width: 44px; font-size: 13px; }
  .views .less { width: 28px; margin-right: 2px; }
  .views input { appearance: none; width: 112px; height: 1px; background: #4d5970; }
  .views input::-webkit-slider-thumb { appearance: none; width: 8px; height: 8px; border-radius: 50%; background: #4d5970; }

  .meter { position: absolute; right: 0; bottom: 127px; display: flex; flex-direction: column; gap: 1px; width: 10px; height: 59px; padding: 6px 2px 0 3px; border: 1px solid #30323c; border-right: 0; border-radius: 4px 0 0 4px; background: #545766; }
  .meter i { flex: none; height: 1px; background: #5fdcc0; }
  .meter .dark { background: #30323c; }
  .meter .amber { background: #f0c04b; }
  .meter .lime { background: #b5e07a; }
  .ime { position: absolute; right: 1px; bottom: 0; display: flex; align-items: center; gap: 9px; width: 142px; height: 26px; padding-left: 27px; border: 1px solid #b9cfe6; border-radius: 3px; background: #fff; color: #0d6fd8; font-weight: 700; font-size: 14px; }
  .punct { width: 14px; }
  .logo { position: absolute; right: 115px; bottom: 0; }
  .mark { position: absolute; right: 10px; bottom: 6px; width: 106px; display: flex; flex-direction: column; white-space: nowrap; opacity: 0.8; }
  .mark b { color: #3f86cf; font-size: 21px; line-height: 24px; }
  .mark span { color: #43b866; font-size: 17px; line-height: 18px; }
</style>
